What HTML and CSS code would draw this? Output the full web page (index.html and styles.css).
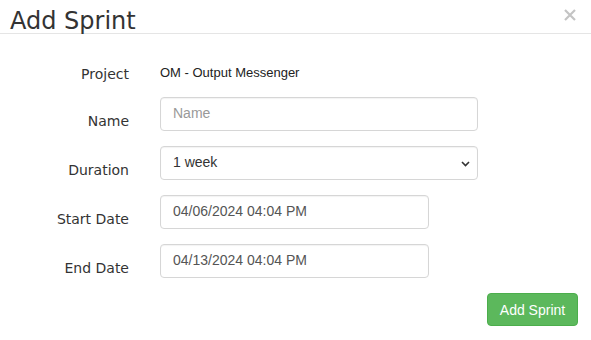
FILE: index.html
```html
<!DOCTYPE html>
<html>
<head>
    <meta name="viewport" content="width=device-width, initial-scale=1.0">
    <title>Add Sprint</title>
    <link rel="stylesheet" href="styles.css">
</head>
<body>
    <div class="modal-header">
        <h4 class="modal-title">Add Sprint</h4>
        <!-- close button -->
        <svg class="close" width="12" height="12" viewBox="0 0 12 12">
            <path d="M1 1 L11 11 M11 1 L1 11" stroke="#c4c4c4" stroke-width="2.2" fill="none"/>
        </svg>
    </div>

    <div class="form">
        <label class="lbl lbl-project">Project</label>
        <div class="static">OM - Output Messenger</div>

        <label class="lbl" for="name">Name</label>
        <input class="ctl" id="name" type="text" placeholder="Name">

        <label class="lbl" for="duration">Duration</label>
        <div class="select-wrap">
            <select class="ctl" id="duration">
                <option>1 week</option>
                <option>2 weeks</option>
                <option>3 weeks</option>
                <option>4 weeks</option>
            </select>
            <svg class="caret" width="9" height="6" viewBox="0 0 9 6">
                <path d="M1 1 L4.5 4.5 L8 1" stroke="#333" stroke-width="1.6" fill="none"/>
            </svg>
        </div>

        <label class="lbl" for="start">Start Date</label>
        <input class="ctl ctl-date" id="start" type="text" value="04/06/2024 04:04 PM">

        <label class="lbl" for="end">End Date</label>
        <input class="ctl ctl-date" id="end" type="text" value="04/13/2024 04:04 PM">
    </div>

    <div class="footer">
        <button class="btn-success">Add Sprint</button>
    </div>
</body>
</html>
```

FILE: styles.css
```css
body {
    margin: 0;
    background-color: #ffffff;
    font-family: "DejaVu Sans", sans-serif;
    color: #333333;
}

.modal-header {
    display: flex;
    justify-content: space-between;
    align-items: flex-start;
    height: 33px;
    border-bottom: 1px solid #e5e5e5;
    padding-left: 10px;
}

.modal-title {
    margin: 0;
    padding-top: 9px;
    font-size: 24px;
    font-weight: normal;
    line-height: 24px;
    color: #333333;
}

.close {
    margin-top: 9px;
    margin-right: 15px;
}

.form {
    display: grid;
    grid-template-columns: 129px 318px;
    grid-template-rows: 32px;
    grid-auto-rows: 34px;
    column-gap: 31px;
    row-gap: 15px;
    margin-top: 16px;
}

.lbl {
    text-align: right;
    font-size: 14px;
    line-height: 20px;
    padding-top: 14px;
    color: #333333;
}

.static {
    font-family: "Liberation Sans", Arial, sans-serif;
    font-size: 13px;
    line-height: 20px;
    padding-top: 13px;
    color: #222222;
}

.ctl {
    box-sizing: border-box;
    height: 34px;
    width: 318px;
    padding: 5px 12px 7px 12px;
    border: 1px solid #d6d6d6;
    border-radius: 4px;
    box-shadow: inset 0 1px 1px rgba(0, 0, 0, 0.05);
    font-family: "Liberation Sans", Arial, sans-serif;
    font-size: 14px;
    color: #555555;
    background-color: #ffffff;
    outline: none;
}

.ctl::placeholder {
    color: #999999;
}

.ctl-date {
    width: 269px;
}

.select-wrap {
    position: relative;
    width: 318px;
}

.select-wrap select {
    appearance: none;
    -webkit-appearance: none;
    color: #333333;
}

.caret {
    position: absolute;
    right: 8px;
    top: 15px;
    pointer-events: none;
}

.footer {
    display: flex;
    justify-content: flex-end;
    padding-right: 13px;
    margin-top: 15px;
}

.btn-success {
    height: 33px;
    width: 91px;
    padding: 0;
    white-space: nowrap;
    background-color: #5cb85c;
    border: 1px solid #4cae4c;
    border-radius: 4px;
    color: #ffffff;
    font-family: "Liberation Sans", Arial, sans-serif;
    font-size: 14px;
    cursor: pointer;
}
```
